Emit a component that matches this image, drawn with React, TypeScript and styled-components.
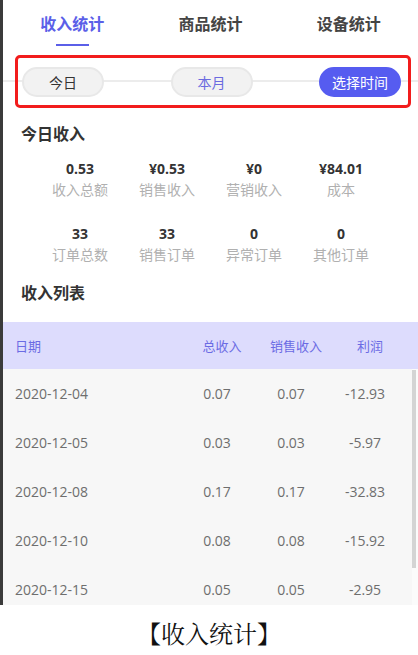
import React from "react";
import styled, { createGlobalStyle } from "styled-components";

const accent = "#5b5fe8";

const GlobalStyle = createGlobalStyle`
  html, body {
    margin: 0;
    padding: 0;
    background: #ffffff;
  }
  body {
    font-family: "Open Sans", "Noto Sans CJK SC", sans-serif;
  }
`;

const Page = styled.div`
  width: 418px;
  height: 655px;
  display: flex;
  flex-direction: column;
  overflow: hidden;
`;

const Phone = styled.div`
  height: 605px;
  border-left: 3px solid #3b3b3b;
  background: #ffffff;
  display: flex;
  flex-direction: column;
  overflow: hidden;
`;

const Tabs = styled.div`
  display: grid;
  grid-template-columns: repeat(3, 1fr);
  height: 50px;
`;

const Tab = styled.div<{ $active?: boolean }>`
  display: flex;
  flex-direction: column;
  align-items: center;
  padding-top: 13px;
  font-size: 16px;
  font-weight: 700;
  line-height: 22px;
  color: ${(p) => (p.$active ? accent : "#444444")};

  &::after {
    content: "";
    width: 33px;
    height: 2px;
    margin-top: 9px;
    background: ${(p) => (p.$active ? accent : "transparent")};
  }
`;

const FilterBar = styled.div`
  padding: 5px 7px 4px 12px;
  background: linear-gradient(
    to bottom,
    transparent calc(50% - 1px),
    #ececec calc(50% - 1px),
    #ececec calc(50% + 1px),
    transparent calc(50% + 1px)
  );
`;

const FilterFrame = styled.div`
  height: 53px;
  box-sizing: border-box;
  border: 3px solid #f21c1c;
  border-radius: 5px;
  padding: 0 7px 0 4px;
  display: flex;
  align-items: center;
  justify-content: space-between;
`;

const Pill = styled.div<{ $variant: "plain" | "soft" | "primary" }>`
  width: 82px;
  height: 30px;
  box-sizing: border-box;
  border-radius: 15px;
  display: flex;
  align-items: center;
  justify-content: center;
  font-size: 14px;
  background: ${(p) => (p.$variant === "primary" ? "#565cf0" : "#f2f2f2")};
  border: 2px solid ${(p) => (p.$variant === "primary" ? "#565cf0" : "#e8e8e8")};
  color: ${(p) =>
    p.$variant === "primary" ? "#ffffff" : p.$variant === "soft" ? "#6b6be0" : "#333333"};
`;

const Section = styled.div`
  padding: 11px 0 0;
`;

const Heading = styled.div`
  padding-left: 18px;
  font-size: 16px;
  font-weight: 700;
  line-height: 22px;
  color: #333333;
`;

const StatGrid = styled.div`
  width: 348px;
  margin: 14px auto 0;
  display: grid;
  grid-template-columns: repeat(4, 1fr);
  row-gap: 23px;
`;

const Stat = styled.div`
  display: flex;
  flex-direction: column;
  align-items: center;
`;

const StatValue = styled.div`
  font-size: 14px;
  font-weight: 700;
  line-height: 20px;
  color: #333333;
`;

const StatLabel = styled.div`
  font-size: 14px;
  line-height: 22px;
  color: #b0b0b0;
`;

const ListHeading = styled(Heading)`
  margin-top: 16px;
`;

const Table = styled.div`
  margin-top: 18px;
  display: flex;
  flex-direction: column;
  flex: 1;
  min-height: 0;
`;

const HeaderRow = styled.div`
  height: 47px;
  display: grid;
  grid-template-columns: 1fr 74px 74px 74px;
  align-items: center;
  padding: 0 11px 0 12px;
  background: #dddcfd;
  font-size: 13px;
  color: #6b6be4;
`;

const Cell = styled.div<{ $left?: boolean }>`
  text-align: ${(p) => (p.$left ? "left" : "center")};
`;

const Body = styled.div`
  display: flex;
  flex: 1;
  min-height: 0;
  overflow: hidden;
  background: #f7f7f7;
`;

const Rows = styled.div`
  flex: 1;
`;

const Row = styled.div`
  height: 49px;
  display: grid;
  grid-template-columns: 1fr 74px 74px 74px;
  align-items: center;
  padding: 0 10px 0 12px;
  font-size: 14px;
  color: #6e6e6e;
`;

const ScrollTrack = styled.div`
  width: 6px;
  background: #fbfbfb;
  padding-top: 1px;
`;

const ScrollThumb = styled.div`
  width: 4px;
  height: 198px;
  background: #d4d4d4;
`;

const Caption = styled.div`
  flex: 1;
  display: flex;
  align-items: center;
  justify-content: center;
  padding-top: 4px;
  font-family: "Noto Serif CJK SC", "AR PL UMing CN", "Liberation Serif", "Noto Sans CJK SC", serif;
  font-size: 24px;
  color: #111111;
`;

const stats = [
  { value: "0.53", label: "收入总额" },
  { value: "¥0.53", label: "销售收入" },
  { value: "¥0", label: "营销收入" },
  { value: "¥84.01", label: "成本" },
  { value: "33", label: "订单总数" },
  { value: "33", label: "销售订单" },
  { value: "0", label: "异常订单" },
  { value: "0", label: "其他订单" },
];

const rows = [
  ["2020-12-04", "0.07", "0.07", "-12.93"],
  ["2020-12-05", "0.03", "0.03", "-5.97"],
  ["2020-12-08", "0.17", "0.17", "-32.83"],
  ["2020-12-10", "0.08", "0.08", "-15.92"],
  ["2020-12-15", "0.05", "0.05", "-2.95"],
];

export default function App() {
  return (
    <>
      <GlobalStyle />
      <Page>
        <Phone>
          <Tabs>
            <Tab $active>收入统计</Tab>
            <Tab>商品统计</Tab>
            <Tab>设备统计</Tab>
          </Tabs>

          <FilterBar>
            <FilterFrame>
              <Pill $variant="plain">今日</Pill>
              <Pill $variant="soft">本月</Pill>
              <Pill $variant="primary">选择时间</Pill>
            </FilterFrame>
          </FilterBar>

          <Section>
            <Heading>今日收入</Heading>
            <StatGrid>
              {stats.map((s) => (
                <Stat key={s.label}>
                  <StatValue>{s.value}</StatValue>
                  <StatLabel>{s.label}</StatLabel>
                </Stat>
              ))}
            </StatGrid>
            <ListHeading>收入列表</ListHeading>
          </Section>

          <Table>
            <HeaderRow>
              <Cell $left>日期</Cell>
              <Cell>总收入</Cell>
              <Cell>销售收入</Cell>
              <Cell>利润</Cell>
            </HeaderRow>
            <Body>
              <Rows>
                {rows.map((r) => (
                  <Row key={r[0]}>
                    <Cell $left>{r[0]}</Cell>
                    <Cell>{r[1]}</Cell>
                    <Cell>{r[2]}</Cell>
                    <Cell>{r[3]}</Cell>
                  </Row>
                ))}
              </Rows>
              <ScrollTrack>
                <ScrollThumb />
              </ScrollTrack>
            </Body>
          </Table>
        </Phone>
        <Caption>【收入统计】</Caption>
      </Page>
    </>
  );
}
